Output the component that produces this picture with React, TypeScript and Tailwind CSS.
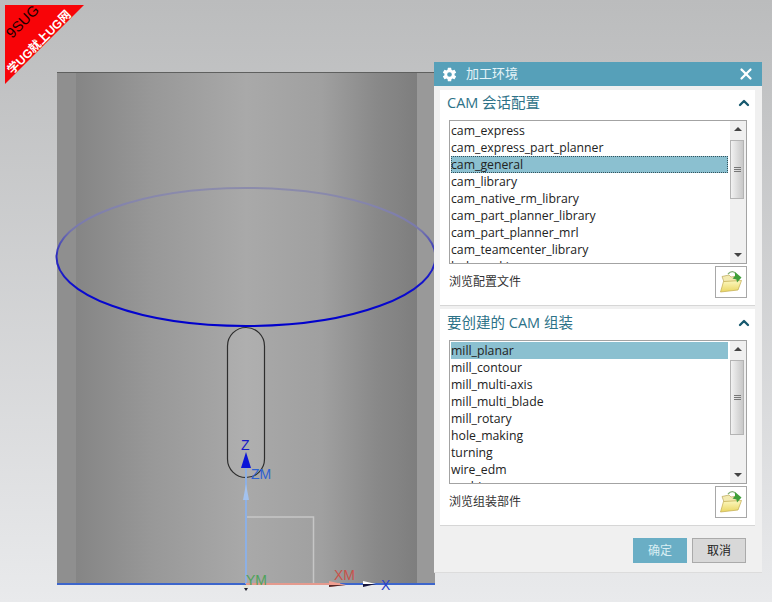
import { ChevronUp, X } from "lucide-react";
import { IoSettingsSharp } from "react-icons/io5";

const cjk = "font-['Open_Sans','Noto_Sans_CJK_SC',sans-serif]";

const configs = [
  "cam_express",
  "cam_express_part_planner",
  "cam_general",
  "cam_library",
  "cam_native_rm_library",
  "cam_part_planner_library",
  "cam_part_planner_mrl",
  "cam_teamcenter_library",
  "hole_making",
];

const assemblies = [
  "mill_planar",
  "mill_contour",
  "mill_multi-axis",
  "mill_multi_blade",
  "mill_rotary",
  "hole_making",
  "turning",
  "wire_edm",
  "probing",
];

function Viewport() {
  return (
    <svg className="absolute left-0 top-0" width="772" height="602" viewBox="0 0 772 602">
      <defs>
        <linearGradient id="cyl" x1="0" x2="1" y1="0" y2="0">
          <stop offset="0" stopColor="#858585" />
          <stop offset="0.22" stopColor="#989898" />
          <stop offset="0.5" stopColor="#a9a9a9" />
          <stop offset="0.72" stopColor="#a0a0a0" />
          <stop offset="0.88" stopColor="#898989" />
          <stop offset="1" stopColor="#7e7e7e" />
        </linearGradient>
        <linearGradient id="ring" gradientUnits="userSpaceOnUse" x1="0" x2="0" y1="188" y2="326">
          <stop offset="0" stopColor="#8c8cab" />
          <stop offset="0.3" stopColor="#7878ac" />
          <stop offset="0.48" stopColor="#2f2fbc" />
          <stop offset="0.75" stopColor="#0a0ad0" />
          <stop offset="1" stopColor="#0000cc" />
        </linearGradient>
      </defs>

      {/* part */}
      <rect x="57" y="72" width="378" height="512" fill="#999999" />
      <rect x="57" y="72" width="19" height="512" fill="#8f8f8f" />
      <rect x="76" y="72" width="341" height="512" fill="url(#cyl)" />
      <line x1="57" y1="72.5" x2="435" y2="72.5" stroke="#5f605f" />
      <ellipse cx="246" cy="257" rx="189.5" ry="69" fill="none" stroke="url(#ring)" strokeWidth="2" />
      <rect x="227.5" y="327.5" width="37" height="150" rx="18.5" fill="#ffffff" fillOpacity="0.07" stroke="#2e2e2e" strokeWidth="1.2" />

      {/* csys */}
      <path d="M246 517H313.5V584" fill="none" stroke="#c6c6c6" strokeWidth="1.5" />
      <line x1="57" y1="584" x2="435" y2="584" stroke="#3d66cc" strokeWidth="2" />
      <line x1="246" y1="468" x2="246" y2="584" stroke="#8db0e4" strokeWidth="2" />
      <path d="M246 484L249 500H243Z" fill="#a3c2ee" />
      <path d="M246 452L251 468H241Z" fill="#0b14d8" />
      <line x1="246" y1="584" x2="340" y2="584" stroke="#e49a8e" strokeWidth="2" />
      <path d="M329 581L346 585L329 587Z" fill="#f09e90" />
      <path d="M329 585L346 585L329 587Z" fill="#552a2a" />
      <path d="M363 581L376 584L363 584Z" fill="#ffffff" />
      <path d="M363 584L376 584L363 587Z" fill="#14143c" />
      <path d="M242 585H250L246 591Z" fill="#e4e4d8" />
      <path d="M244 588H248L246 591Z" fill="#223" />
      <g fontFamily="'Liberation Sans', sans-serif" fontSize="14">
        <text x="241" y="450" fill="#1616c8">Z</text>
        <text x="251" y="479" fill="#2f62d2">ZM</text>
        <text x="246" y="585" fill="#4fa35a">YM</text>
        <text x="334" y="580" fill="#c9524a">XM</text>
        <text x="381" y="590" fill="#2a3fc8">X</text>
      </g>

      {/* watermark */}
      <path d="M5 5H84L5 84Z" fill="#f80408" />
      <text transform="translate(26 25) rotate(-45)" textAnchor="middle" fontFamily="'Liberation Sans', sans-serif" fontSize="14.5" fill="#1a0000">
        9SUG
      </text>
      <text transform="translate(42 45) rotate(-45)" textAnchor="middle" fontFamily="'Liberation Sans', 'Noto Sans CJK SC', sans-serif" fontSize="12" fontWeight="700" fill="#ffffff">
        学UG就上UG网
      </text>
    </svg>
  );
}

function FolderIcon() {
  return (
    <svg width="24" height="24" viewBox="0 0 24 24">
      <defs>
        <linearGradient id="fold" x1="0" x2="0" y1="0" y2="1">
          <stop offset="0" stopColor="#fdf8c0" />
          <stop offset="1" stopColor="#ead663" />
        </linearGradient>
      </defs>
      <path d="M3 6.5L10 5L12 7L18 6L18.5 12L5 12Z" fill="#f3eab0" stroke="#b9a75c" strokeWidth="0.7" />
      <path d="M1.5 22L4.5 11.5L22.5 10.5L19 20Z" fill="url(#fold)" stroke="#c2ab4e" strokeWidth="0.7" />
      <path d="M9 4C12 0.5 15 1 17 4" fill="none" stroke="#7fae74" strokeWidth="1.2" />
      <path d="M16 2L22.5 7.5L18 12.5L17.5 9.5L13.5 8.5L16 6Z" fill="#3f9f3a" />
    </svg>
  );
}

function Arrow({ up }: { up?: boolean }) {
  return (
    <div className="flex h-[16px] items-center justify-center">
      {up ? (
        <div className="border-x-[4px] border-b-[4px] border-x-transparent border-b-[#444]" />
      ) : (
        <div className="border-x-[4px] border-t-[4px] border-x-transparent border-t-[#444]" />
      )}
    </div>
  );
}

function ListBox({
  items,
  selected,
  focused,
  thumbTop,
  thumbHeight,
}: {
  items: string[];
  selected: number;
  focused?: boolean;
  thumbTop: string;
  thumbHeight: string;
}) {
  return (
    <div className="flex h-[144px] w-[298px] overflow-hidden border border-[#a3a3a3] bg-white">
      <div className="w-[280px] shrink-0 overflow-hidden pl-px pr-[2px] pt-px">
        {items.map((item, i) => (
          <div
            key={item}
            className={
              "h-[17px] text-[12.25px] leading-[17px] text-[#222] " +
              (i === selected ? "bg-[#8bc0d0] " : "") +
              (i === selected && focused ? "outline-1 -outline-offset-1 outline-dotted outline-[#33525c]" : "")
            }
          >
            {item}
          </div>
        ))}
      </div>
      <div className="flex flex-1 flex-col bg-[#f0f0f0]">
        <Arrow up />
        <div className={"mr-[2px] flex flex-col items-center justify-center gap-px border border-[#b4b4b4] bg-gradient-to-r from-[#f2f2f2] to-[#c8c8c8] " + thumbTop + " " + thumbHeight}>
          <div className="h-px w-[7px] bg-[#777]" />
          <div className="h-px w-[7px] bg-[#777]" />
          <div className="h-px w-[7px] bg-[#777]" />
        </div>
        <div className="flex-1" />
        <Arrow />
      </div>
    </div>
  );
}

function Section({
  title,
  browse,
  children,
  className,
  headerClass,
}: {
  title: string;
  browse: string;
  children: React.ReactNode;
  className: string;
  headerClass: string;
}) {
  return (
    <section className={"flex flex-col border-b border-[#d6d6d6] bg-white pl-[9px] pr-[8px] " + className}>
      <div className={"-ml-[2px] flex h-[30px] shrink-0 items-center justify-between " + headerClass}>
        <span className="text-[14.5px] text-[#2d7288]">{title}</span>
        <ChevronUp size={16} strokeWidth={3.5} className="-mr-[5px] text-[#17596e]" />
      </div>
      {children}
      <div className="mt-[2px] flex items-center justify-between">
        <span className="text-[12px] text-[#333]">{browse}</span>
        <button className="flex h-[32px] w-[32px] items-center justify-center border border-[#a8a8a8] bg-white">
          <FolderIcon />
        </button>
      </div>
    </section>
  );
}

function Dialog() {
  return (
    <div className={"absolute left-[434px] top-[62px] flex h-[511px] w-[328px] flex-col border-b border-[#dcdcdc] bg-[#f0f0f0] " + cjk}>
      <div className="flex h-[24px] shrink-0 items-center bg-[#56a0b9] pl-[8px] pr-[7px] text-white">
        <IoSettingsSharp size={15} />
        <span className="ml-[9px] text-[13px] text-[#e4f3f7]">加工环境</span>
        <X size={18} strokeWidth={3} className="ml-auto" />
      </div>
      <div className="ml-[6px] mr-[7px] mt-[4px] flex flex-col gap-[3px]">
        <Section title="CAM 会话配置" browse="浏览配置文件" className="h-[216px]" headerClass="pb-[4px]">
          <ListBox items={configs} selected={2} focused thumbTop="mt-[3px]" thumbHeight="h-[59px]" />
        </Section>
        <Section title="要创建的 CAM 组装" browse="浏览组装部件" className="h-[217px]" headerClass="pb-[2px]">
          <div className="mt-px">
            <ListBox items={assemblies} selected={0} thumbTop="mt-[3px]" thumbHeight="h-[75px]" />
          </div>
        </Section>
      </div>
      <div className="mt-[12px] flex justify-end gap-[5px] pr-[16px]">
        <button className="h-[25px] w-[54px] bg-[#6aaec5] text-[12px] text-[#d9eef4]">确定</button>
        <button className="h-[25px] w-[54px] border border-[#aaaaaa] bg-[#d8d8d8] text-[12px] text-[#222]">取消</button>
      </div>
    </div>
  );
}

export default function App() {
  return (
    <div className="relative h-[602px] w-[772px] overflow-hidden bg-gradient-to-b from-[#bbbcbd] to-[#e9eaec]">
      <Viewport />
      <Dialog />
    </div>
  );
}
